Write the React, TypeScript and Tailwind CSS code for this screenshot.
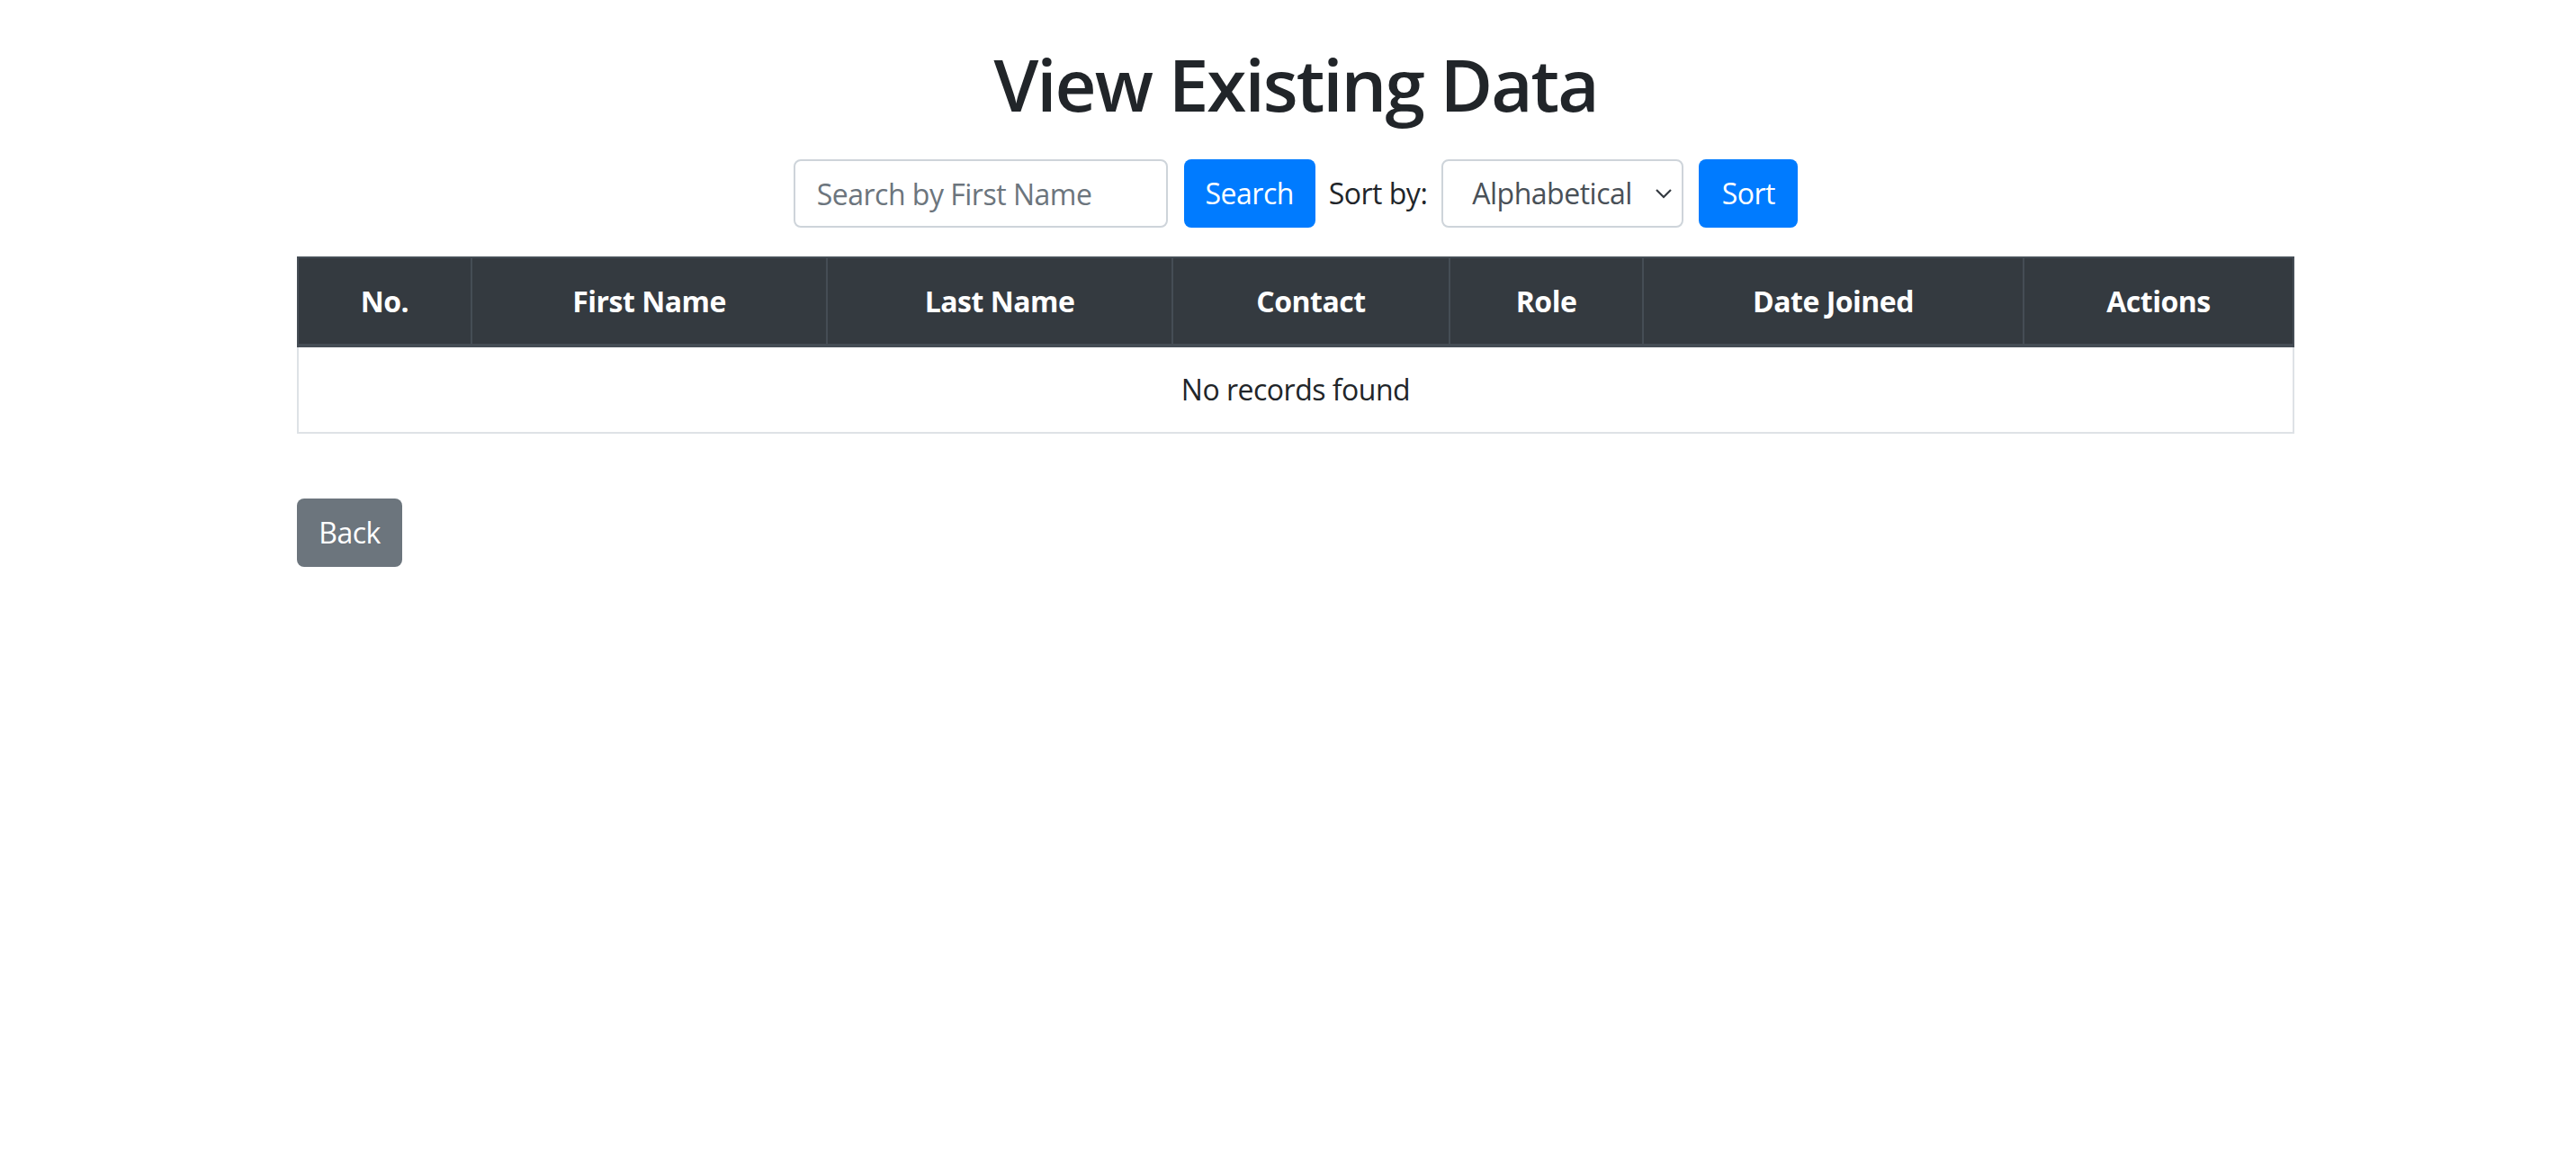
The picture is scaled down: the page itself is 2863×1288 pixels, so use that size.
import React from "react";

const columns = [
  { label: "No.", width: "w-[193px]" },
  { label: "First Name", width: "w-[395px]" },
  { label: "Last Name", width: "w-[384px]" },
  { label: "Contact", width: "w-[308px]" },
  { label: "Role", width: "w-[215px]" },
  { label: "Date Joined", width: "w-[423px]" },
  { label: "Actions", width: "" },
];

const font = { fontFamily: '"Open Sans", "Noto Sans", sans-serif' };

export default function App() {
  return (
    <div className="w-full min-h-screen bg-white pl-[17px] text-[#212529]" style={font}>
      <div className="w-[2220px] mx-auto">
        <h1 className="text-center text-[80px] leading-[96px] font-semibold tracking-[-2px] pt-[45px] text-[#212529]">
          View Existing Data
        </h1>

        <SearchBar />

        <RecordsTable />

        <button className="mt-[72px] h-[76px] w-[117px] rounded-[8px] bg-[#6c757d] text-white text-[32px] tracking-[-0.5px]">
          Back
        </button>
      </div>
    </div>
  );
}

function SearchBar() {
  return (
    <div className="mt-[36px] flex justify-center items-center h-[76px]">
      <input
        type="text"
        placeholder="Search by First Name"
        className="w-[416px] h-[76px] border-2 border-[#ced4da] rounded-[8px] px-[24px] text-[32px] tracking-[-0.5px] text-[#495057] placeholder:text-[#6c757d] outline-none"
      />
      <button className="ml-[18px] w-[146px] h-[76px] rounded-[8px] bg-[#007bff] text-white text-[32px] tracking-[-0.5px]">
        Search
      </button>
      <span className="ml-[15px] text-[32px] tracking-[-0.5px] text-[#212529]">Sort by:</span>
      <div className="ml-[16px] relative w-[269px] h-[76px] border-2 border-[#ced4da] rounded-[8px] flex items-center pl-[32px] text-[32px] tracking-[-0.5px] text-[#495057]">
        Alphabetical
        <svg
          className="absolute right-[10px] top-[30px]"
          width="20"
          height="12"
          viewBox="0 0 20 12"
          fill="none"
          stroke="#343a40"
          strokeWidth="2.2"
        >
          <path d="M2 2 L10 10 L18 2" />
        </svg>
      </div>
      <button className="ml-[17px] w-[110px] h-[76px] rounded-[8px] bg-[#007bff] text-white text-[32px] tracking-[-0.5px]">
        Sort
      </button>
    </div>
  );
}

function RecordsTable() {
  return (
    <table className="mt-[32px] w-full border-collapse text-[32px]">
      <thead>
        <tr className="bg-[#343a40] text-white">
          {columns.map((col) => (
            <th
              key={col.label}
              className={`${col.width} h-[98px] border-2 border-b-4 border-[#454d55] font-bold text-center tracking-[-0.5px] leading-[48px]`}
            >
              {col.label}
            </th>
          ))}
        </tr>
      </thead>
      <tbody>
        <tr>
          <td
            colSpan={7}
            className="h-[97px] border-2 border-[#dee2e6] text-center leading-[48px] tracking-[-0.5px] text-[#212529]"
          >
            No records found
          </td>
        </tr>
      </tbody>
    </table>
  );
}
